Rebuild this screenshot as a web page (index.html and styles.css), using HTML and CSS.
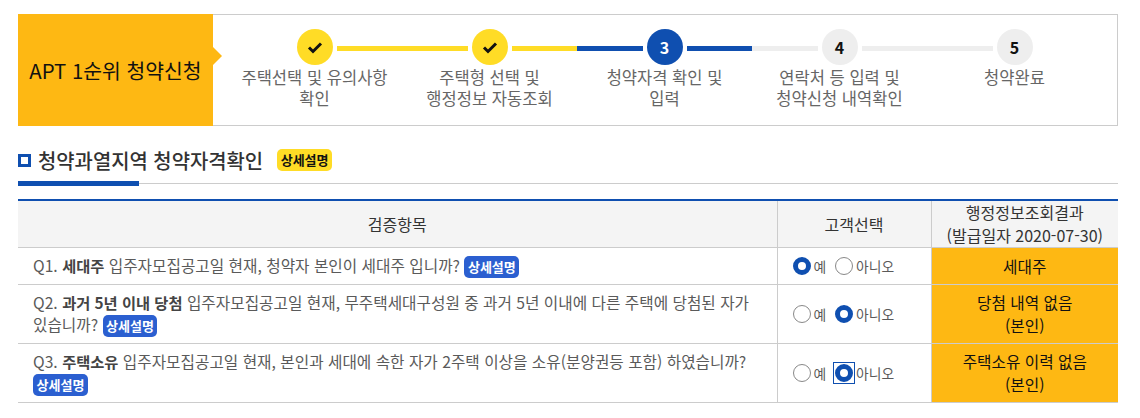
FILE: index.html
```html
<!DOCTYPE html>
<html lang="ko">
<head>
    <meta charset="UTF-8">
    <meta name="viewport" content="width=device-width, initial-scale=1.0">
    <title>APT 1순위 청약신청</title>
    <link rel="stylesheet" href="styles.css">
</head>
<body>
    <div class="step-box">
        <h1 class="step-title">APT 1순위 청약신청</h1>
        <ol class="steps">
            <li class="step done">
                <div class="step-head">
                    <span class="bar bar-none"></span>
                    <span class="circle"><svg width="16" height="13" viewBox="0 0 16 13"><path d="M2 6.5 L6 10.5 L14 2.5" fill="none" stroke="#111" stroke-width="3"/></svg></span>
                    <span class="bar bar-yellow"></span>
                </div>
                <p>주택선택 및 유의사항<br>확인</p>
            </li>
            <li class="step done">
                <div class="step-head">
                    <span class="bar bar-yellow"></span>
                    <span class="circle"><svg width="16" height="13" viewBox="0 0 16 13"><path d="M2 6.5 L6 10.5 L14 2.5" fill="none" stroke="#111" stroke-width="3"/></svg></span>
                    <span class="bar bar-yellow"></span>
                </div>
                <p>주택형 선택 및<br>행정정보 자동조회</p>
            </li>
            <li class="step current">
                <div class="step-head">
                    <span class="bar bar-blue"></span>
                    <span class="circle">3</span>
                    <span class="bar bar-blue"></span>
                </div>
                <p>청약자격 확인 및<br>입력</p>
            </li>
            <li class="step">
                <div class="step-head">
                    <span class="bar"></span>
                    <span class="circle">4</span>
                    <span class="bar"></span>
                </div>
                <p>연락처 등 입력 및<br>청약신청 내역확인</p>
            </li>
            <li class="step">
                <div class="step-head">
                    <span class="bar"></span>
                    <span class="circle">5</span>
                    <span class="bar bar-none"></span>
                </div>
                <p>청약완료</p>
            </li>
        </ol>
    </div>

    <div class="section-head">
        <span class="marker"></span>
        <h2>청약과열지역 청약자격확인</h2>
        <span class="badge badge-yellow">상세설명</span>
    </div>

    <table class="check-table">
        <colgroup>
            <col class="col-item">
            <col class="col-choice">
            <col class="col-result">
        </colgroup>
        <thead>
            <tr>
                <th>검증항목</th>
                <th>고객선택</th>
                <th>행정정보조회결과<br>(발급일자 2020-07-30)</th>
            </tr>
        </thead>
        <tbody>
            <tr class="row-short">
                <td class="question">Q1. <b>세대주</b> 입주자모집공고일 현재, 청약자 본인이 세대주 입니까? <span class="badge badge-blue">상세설명</span></td>
                <td class="choice">
                    <label><span class="radio-wrap"><input type="radio" name="q1" checked></span>예</label>
                    <label><span class="radio-wrap"><input type="radio" name="q1"></span>아니오</label>
                </td>
                <td class="result">세대주</td>
            </tr>
            <tr>
                <td class="question">Q2. <b>과거 5년 이내 당첨</b> 입주자모집공고일 현재, 무주택세대구성원 중 과거 5년 이내에 다른 주택에 당첨된 자가 있습니까? <span class="badge badge-blue">상세설명</span></td>
                <td class="choice">
                    <label><span class="radio-wrap"><input type="radio" name="q2"></span>예</label>
                    <label><span class="radio-wrap"><input type="radio" name="q2" checked></span>아니오</label>
                </td>
                <td class="result">당첨 내역 없음<br>(본인)</td>
            </tr>
            <tr>
                <td class="question">Q3. <b>주택소유</b> 입주자모집공고일 현재, 본인과 세대에 속한 자가 2주택 이상을 소유(분양권등 포함) 하였습니까? <span class="badge badge-blue">상세설명</span></td>
                <td class="choice">
                    <label><span class="radio-wrap"><input type="radio" name="q3"></span>예</label>
                    <label><span class="radio-wrap focused"><input type="radio" name="q3" checked></span>아니오</label>
                </td>
                <td class="result">주택소유 이력 없음<br>(본인)</td>
            </tr>
        </tbody>
    </table>
</body>
</html>
```

FILE: styles.css
```css
* {
    box-sizing: border-box;
}

body {
    margin: 0;
    padding: 14px 22px 0 18px;
    background: #ffffff;
    font-family: "Noto Sans CJK KR", "Noto Sans", sans-serif;
    font-size: 15.7px;
    color: #5a5a5a;
}

/* step box */
.step-box {
    display: flex;
    height: 112px;
    border: 1px solid #cccccc;
    border-left: none;
}

.step-title {
    position: relative;
    flex: none;
    display: flex;
    align-items: center;
    justify-content: center;
    width: 195px;
    margin: -1px 0;
    padding-bottom: 1px;
    background: #feb813;
    font-size: 20.4px;
    font-weight: 400;
    color: #111111;
}

.step-title::after {
    content: "";
    position: absolute;
    left: 100%;
    top: 33px;
    border-left: 9px solid #feb813;
    border-top: 9px solid transparent;
    border-bottom: 9px solid transparent;
}

.steps {
    display: flex;
    margin: 0;
    padding: 14px 0 0 14px;
    list-style: none;
}

.step {
    width: 175px;
}

.step p {
    margin: 2px 0 0;
    font-size: 16.55px;
    line-height: 20.5px;
    text-align: center;
    color: #666666;
}

.step-head {
    display: flex;
    align-items: center;
    gap: 4px;
}

.circle {
    flex: none;
    display: flex;
    align-items: center;
    justify-content: center;
    width: 36px;
    height: 36px;
    border-radius: 50%;
    background: #eeeeee;
    font-size: 16px;
    font-weight: 700;
    color: #111111;
}

.done .circle {
    background: #ffdc26;
}

.current .circle {
    background: #0f4fb0;
    color: #ffffff;
}

.bar {
    flex: 1;
    height: 5px;
    margin-top: 2px;
    background: #eeeeee;
}

.bar-yellow {
    background: #ffdc26;
}

.bar-blue {
    background: #0f4fb0;
}

.bar-none {
    background: transparent;
}

/* section heading */
.section-head {
    position: relative;
    display: flex;
    align-items: center;
    height: 58px;
    padding-top: 23px;
    padding-bottom: 12px;
    border-bottom: 1px solid #cccccc;
}

.section-head::after {
    content: "";
    position: absolute;
    left: 0;
    bottom: -3px;
    width: 121px;
    height: 5px;
    background: #0f4fb0;
}

.marker {
    flex: none;
    width: 13px;
    height: 13px;
    border: 3px solid #0f4fb0;
}

.section-head h2 {
    margin: 0 14px 0 7px;
    font-size: 19.9px;
    font-weight: 500;
    color: #333333;
}

.badge {
    display: inline-block;
    height: 22px;
    padding: 0 3.5px;
    border-radius: 5px;
    font-size: 13px;
    font-weight: 700;
    line-height: 21px;
    vertical-align: middle;
}

.badge-yellow {
    background: #ffdc26;
    color: #111111;
}

.badge-blue {
    background: #2b5fd0;
    color: #ffffff;
}

/* table */
.check-table {
    width: 100%;
    margin-top: 15px;
    border-collapse: collapse;
    table-layout: fixed;
    border-top: 2px solid #0f4fb0;
}

.col-choice {
    width: 154px;
}

.col-result {
    width: 187px;
}

.check-table th {
    height: 47px;
    padding: 0;
    background: #f4f4f4;
    border: 1px solid #cccccc;
    border-top: none;
    font-size: 16px;
    font-weight: 400;
    line-height: 23px;
    color: #333333;
}

.check-table td {
    height: 59px;
    border: 1px solid #cccccc;
    line-height: 22px;
}

.check-table th:first-child,
.check-table td:first-child {
    border-left: none;
}

.check-table th:last-child,
.check-table td:last-child {
    border-right: none;
}

.check-table .row-short td {
    height: 37px;
}

.question {
    padding: 3px 15px;
}

.question b {
    font-size: 15.3px;
    color: #444444;
}

.choice {
    padding: 2px 0 0 15px;
    font-size: 13.8px;
}

.choice label {
    display: inline-flex;
    align-items: center;
    margin-right: 5px;
}

.radio-wrap {
    display: flex;
    margin-right: 3px;
}

.radio-wrap.focused {
    outline: 1px solid #0f4fb0;
    outline-offset: 1px;
}

.choice input {
    appearance: none;
    width: 18px;
    height: 18px;
    margin: 0;
    border: 1px solid #888888;
    border-radius: 50%;
    background: #ffffff;
}

.choice input:checked {
    border: 5px solid #0f4fb0;
}

.check-table td.result {
    background: #feb813;
    border-top-color: #e0c070;
    font-size: 15.7px;
    line-height: 23px;
    color: #111111;
    text-align: center;
}
```
